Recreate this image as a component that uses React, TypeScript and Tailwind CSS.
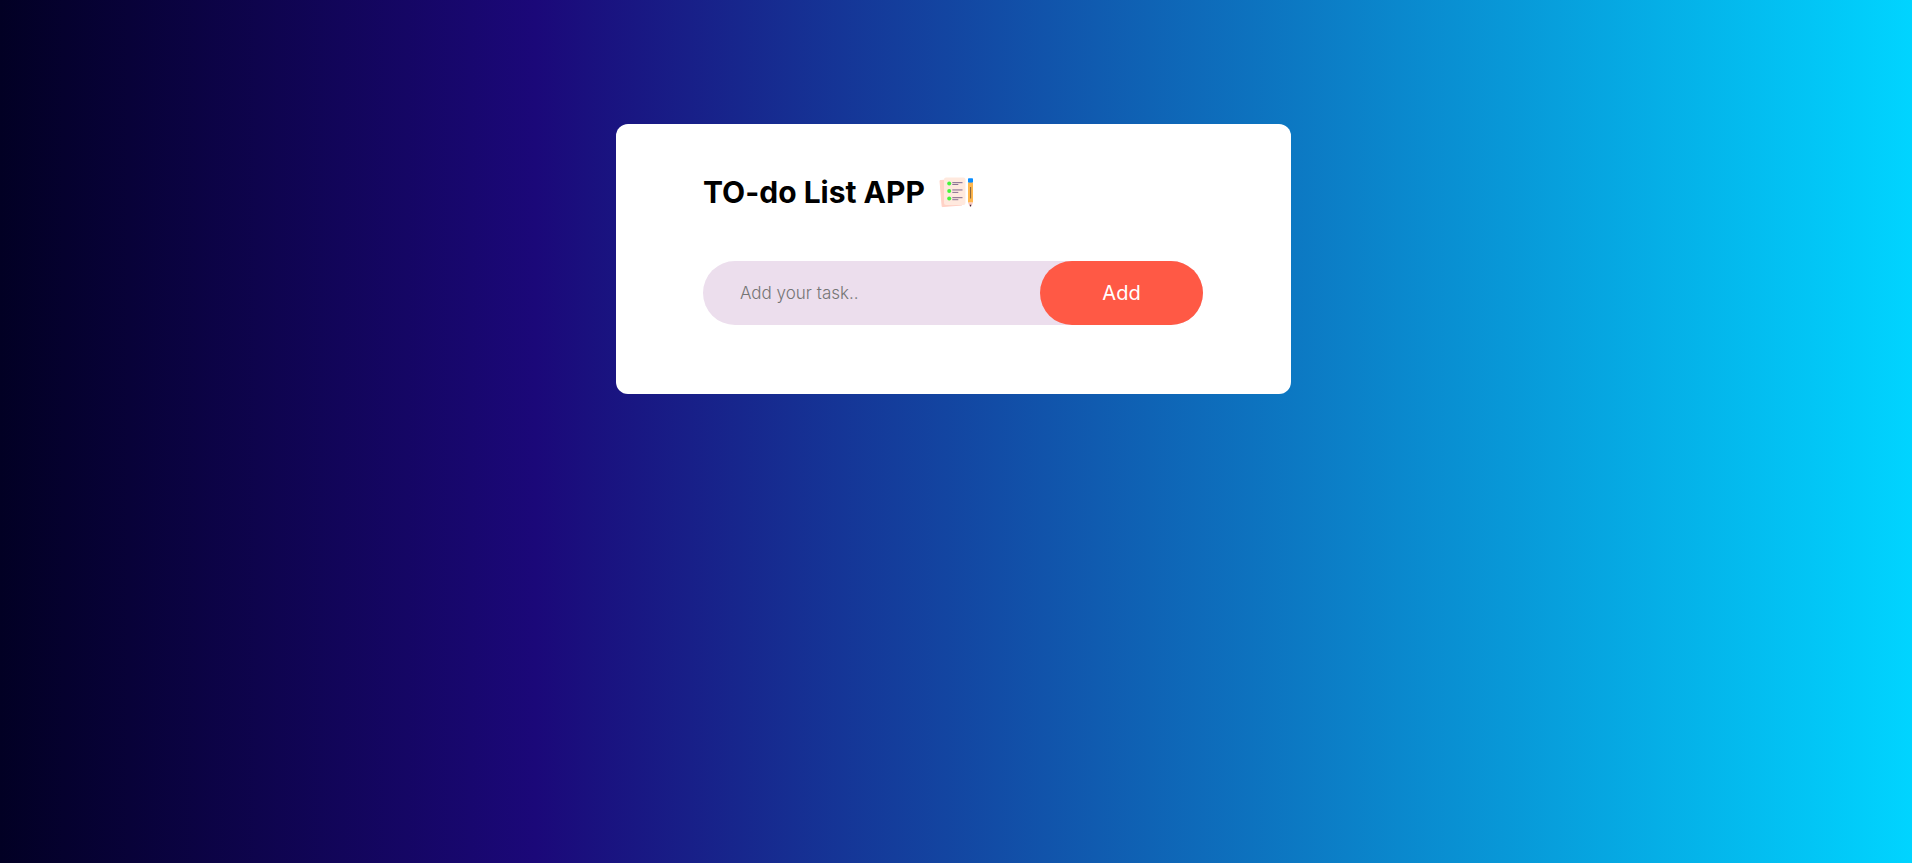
function NotesIcon() {
  return (
    <svg viewBox="0 -1 36 32" className="h-8 w-9 shrink-0" aria-hidden="true">
      <path d="M1 3.6 L20 2 L23 28 L3.2 29.6 Z" fill="#ffd2c6" stroke="#ffd2c6" strokeWidth="1" strokeLinejoin="round" />
      <rect x="5" y="0.5" width="21.5" height="27.5" rx="2" fill="#ffe9de" />
      <g fill="#43f53a">
        <circle cx="10.2" cy="6.4" r="2" />
        <circle cx="10.2" cy="14" r="2" />
        <circle cx="10.2" cy="21.6" r="2" />
      </g>
      <g fill="#8b7393">
        <rect x="13.3" y="5.1" width="10.2" height="1.1" />
        <rect x="13.3" y="7" width="6" height="1" />
        <rect x="13.3" y="12.4" width="10.2" height="1.1" />
        <rect x="13.3" y="14.9" width="6" height="1" />
        <rect x="13.3" y="20.1" width="10.2" height="1.1" />
        <rect x="13.3" y="22.2" width="6" height="1" />
      </g>
      <rect x="29" y="1.3" width="5" height="4.6" rx="0.8" fill="#078cff" />
      <rect x="29" y="5.6" width="5" height="20" fill="#ffb74d" />
      <rect x="31.1" y="10" width="1" height="11.5" fill="#80613d" />
      <path d="M29 25.4h5l-1.7 4h-1.6z" fill="#f8c9c4" />
      <path d="M30.6 27.7h1.8l-.9 2.3z" fill="#3d2638" />
    </svg>
  );
}

export default function App() {
  return (
    <main className="min-h-screen bg-[linear-gradient(90deg,#020024_0%,#1b0879_28%,#00d4ff_100%)] pt-[124px] pr-[5px] font-[Inter,sans-serif]">
      <section className="mx-auto w-full max-w-[675px] rounded-xl bg-white pt-[50px] pr-[88px] pb-[69px] pl-[87px] text-black">
        <h1 className="flex items-center gap-[14px] text-[30px] leading-9 font-bold">
          TO-do List APP
          <NotesIcon />
        </h1>
        <form className="mt-[51px] flex h-16 rounded-full bg-[#ecdeed]">
          <input aria-label="Task" placeholder="Add your task.." className="min-w-0 flex-1 rounded-full bg-transparent pt-0.5 pr-4 pl-[37px] text-[17px] font-light outline-none placeholder:text-[#757575]" />
          <button type="button" className="w-[163px] rounded-full bg-[#ff5945] text-xl text-white">Add</button>
        </form>
      </section>
    </main>
  );
}
